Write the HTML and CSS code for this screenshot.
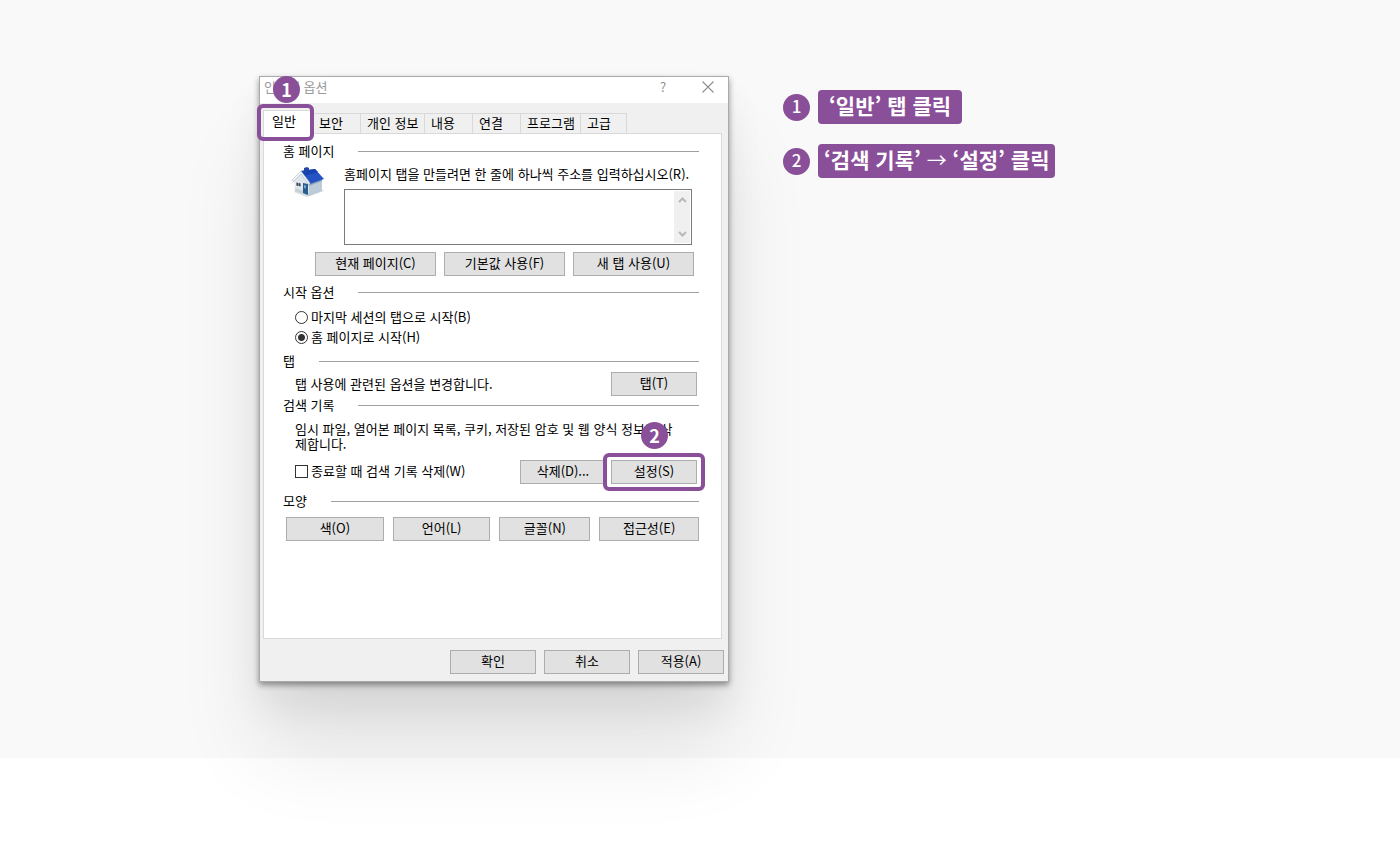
FILE: index.html
```html
<!DOCTYPE html>
<html lang="ko">
<head>
<meta charset="utf-8">
<meta name="viewport" content="width=device-width, initial-scale=1">
<title>인터넷 옵션</title>
<link rel="stylesheet" href="styles.css">
</head>
<body>
<main class="stage">
  <div class="guide">
    <section class="dialog" aria-label="인터넷 옵션">
      <header class="titlebar">
        <h1 class="title">인터넷 옵션</h1>
        <button class="winbtn" type="button" aria-label="도움말">?</button>
        <button class="winbtn" type="button" aria-label="닫기">
          <svg width="12" height="12" viewBox="0 0 12 12" fill="none" stroke="#8f8f8f" stroke-width="1.1"><path d="M.5.5l11 11M11.5.5l-11 11"/></svg>
        </button>
      </header>

      <div class="tabs" role="tablist">
        <div class="marked">
          <button class="tab tab-on" type="button" role="tab" aria-selected="true">일반</button>
          <span class="ring ring-tab"></span>
          <span class="badge badge-over badge-tab">1</span>
        </div>
        <button class="tab tab-first" type="button" role="tab">보안</button>
        <button class="tab tab-wide" type="button" role="tab">개인 정보</button>
        <button class="tab" type="button" role="tab">내용</button>
        <button class="tab" type="button" role="tab">연결</button>
        <button class="tab tab-program" type="button" role="tab">프로그램</button>
        <button class="tab tab-last" type="button" role="tab">고급</button>
      </div>

      <div class="panel">
        <section class="group">
          <h2 class="heading">홈 페이지</h2>
          <div class="home">
            <svg class="house" width="34" height="32" viewBox="0 0 34 32" aria-hidden="true">
              <path d="M3 25l13 5 17-6-5-3-22 1z" fill="#b5bcb5" opacity=".5"/>
              <path d="M3 13l7-8 8 12v12L4 24z" fill="#dfe7ed"/>
              <path d="M18 16l13-4v12l-13 5z" fill="#bccbd8"/>
              <path d="M18 17l13-5v2l-13 5z" fill="#8ea4ba"/>
              <path d="M4 21l14 5v3L4 24z" fill="#c6cfd2"/>
              <path d="M13 3V1l3-1 2 1v4h-5z" fill="#2647a4"/>
              <path d="M10 4l14-2 9 10-14 5z" fill="#2454c4"/>
              <path d="M10 4l14-2 3 3-14 4z" fill="#1743ae"/>
              <path d="M1 13l9-9 9 12-1 2-8-11-8 8z" fill="#f3f6f8" stroke="#a9b7c2" stroke-width=".6"/>
              <path d="M12 16l5 1v11l-5-2z" fill="#285d91"/>
              <path d="M13 18l2 .5v3l-2-.5z" fill="#75a8c9"/>
              <path d="M5 15l5 1v4l-5-1z" fill="#344657" stroke="#fff" stroke-width=".7"/>
              <path d="M7.500 15.500v4" stroke="#fff" stroke-width=".4"/>
            </svg>
            <div class="home-main">
              <label class="home-label" for="urls">홈페이지 탭을 만들려면 한 줄에 하나씩 주소를 입력하십시오(R).</label>
              <div class="urlbox">
                <textarea class="urls" id="urls"></textarea>
                <span class="scroll" aria-hidden="true">
                  <svg width="9" height="6" viewBox="0 0 9 6" fill="none" stroke="#b9b9b9" stroke-width="2"><path d="M1 5l3.500-3.500L8 5"/></svg>
                  <svg width="9" height="6" viewBox="0 0 9 6" fill="none" stroke="#b9b9b9" stroke-width="2"><path d="M1 1l3.500 3.500L8 1"/></svg>
                </span>
              </div>
            </div>
          </div>
          <div class="home-buttons">
            <button class="btn" type="button">현재 페이지(C)</button>
            <button class="btn" type="button">기본값 사용(F)</button>
            <button class="btn" type="button">새 탭 사용(U)</button>
          </div>
        </section>

        <section class="group group-start">
          <h2 class="heading">시작 옵션</h2>
          <div class="radios">
            <label class="option"><input class="radio" type="radio" name="start">마지막 세션의 탭으로 시작(B)</label>
            <label class="option"><input class="radio" type="radio" name="start" checked>홈 페이지로 시작(H)</label>
          </div>
        </section>

        <section class="group group-tight">
          <h2 class="heading">탭</h2>
          <div class="row">
            <p class="text">탭 사용에 관련된 옵션을 변경합니다.</p>
            <button class="btn btn-fixed" type="button">탭(T)</button>
          </div>
        </section>

        <section class="group group-tight group-history">
          <h2 class="heading">검색 기록</h2>
          <p class="text text-history">임시 파일, 열어본 페이지 목록, 쿠키, 저장된 암호 및 웹 양식 정보를 삭제합니다.</p>
          <div class="row">
            <label class="option option-grow"><input class="check" type="checkbox">종료할 때 검색 기록 삭제(W)</label>
            <button class="btn btn-fixed" type="button">삭제(D)...</button>
            <div class="marked marked-set">
              <button class="btn btn-fixed" type="button">설정(S)</button>
              <span class="ring ring-set"></span>
              <span class="badge badge-over badge-set">2</span>
            </div>
          </div>
        </section>

        <section class="group">
          <h2 class="heading">모양</h2>
          <div class="looks">
            <button class="btn" type="button">색(O)</button>
            <button class="btn" type="button">언어(L)</button>
            <button class="btn" type="button">글꼴(N)</button>
            <button class="btn" type="button">접근성(E)</button>
          </div>
        </section>
      </div>

      <footer class="actions">
        <button class="btn btn-fixed" type="button">확인</button>
        <button class="btn btn-fixed" type="button">취소</button>
        <button class="btn btn-fixed" type="button">적용(A)</button>
      </footer>
    </section>

    <ol class="steps">
      <li class="step"><span class="badge">1</span><span class="pill pill-wide">‘일반’ 탭 클릭</span></li>
      <li class="step"><span class="badge">2</span><span class="pill">‘검색 기록’ <span class="arrow">→</span> ‘설정’ 클릭</span></li>
    </ol>
  </div>
</main>
</body>
</html>
```
FILE: styles.css
```css
* { box-sizing: border-box; }

body {
  min-height: 100vh;
  margin: 0;
  background: #fff;
  color: #000;
  font: 13px/18px "Noto Sans CJK KR", sans-serif;
}

h1, h2, p, ol { margin: 0; padding: 0; font: inherit; }
button, textarea { font: inherit; color: inherit; }

.stage { background: #f9f9f9; padding: 76px 24px; }

.guide {
  max-width: 882px;
  margin: 0 auto;
  display: flex;
  flex-wrap: wrap;
  align-items: flex-start;
  gap: 54px;
}

/* Dialog window */
.dialog {
  flex: 0 1 470px;
  background: #f0f0f0;
  border: 1px solid #aaa;
  box-shadow:
    0 3px 6px rgba(0, 0, 0, .4),
    0 24px 36px rgba(0, 0, 0, .07),
    0 70px 80px rgba(0, 0, 0, .09);
}

.titlebar {
  display: flex;
  align-items: center;
  height: 26px;
  padding: 0 10px 6px 4px;
  background: #fff;
  color: #999;
}
.title { flex: 1; }
.winbtn {
  display: flex;
  align-items: center;
  justify-content: center;
  width: 20px;
  height: 20px;
  margin-left: 25px;
  padding: 0;
  border: 0;
  background: none;
  color: #8f8f8f;
}

/* Tabs */
.tabs { display: flex; align-items: flex-end; padding: 7px 3px 0; }
.tab {
  width: 48px;
  height: 20px;
  padding: 0 0 2px 6px;
  border: 1px solid #d9d9d9;
  border-width: 1px 1px 0 0;
  background: #f0f0f0;
  text-align: left;
  white-space: nowrap;
}
.tab-first { width: 47px; padding-left: 5px; }
.tab-wide { width: 64px; }
.tab-program { width: 60px; }
.tab-last { width: 46px; }
.tab-on {
  display: block;
  width: 51px;
  height: 24px;
  margin-bottom: -1px;
  padding: 0 0 4px 8px;
  border-left-width: 1px;
  background: #fff;
}

/* Numbered markers */
.marked { position: relative; }
.badge {
  display: flex;
  align-items: center;
  justify-content: center;
  width: 27px;
  height: 27px;
  padding-bottom: 2px;
  border-radius: 50%;
  background: #8a4f99;
  color: #fff;
  font-size: 17px;
  font-weight: 500;
}
.badge-over { position: absolute; font-size: 18px; font-weight: 700; }
.badge-tab { left: 10px; top: -34px; }
.badge-set { left: 30px; top: -38px; }
.ring {
  position: absolute;
  border: 4px solid #8a4f99;
  border-radius: 6px;
  pointer-events: none;
}
.ring-tab { inset: -6px 0 -8px -6px; }
.ring-set { inset: -7px -8px; }

/* Panel */
.panel {
  min-height: 506px;
  margin: 0 6px 0 3px;
  padding: 8px 22px 24px 19px;
  border: 1px solid #d9d9d9;
  background: #fff;
}
.group { display: grid; gap: 7px; margin-bottom: 7px; }
.group-start { margin-bottom: 6px; }
.group-tight { gap: 2px; margin-bottom: 0; }
.group-history { margin-bottom: 8px; }
.heading { display: flex; align-items: center; gap: 24px; }
.heading::after { content: ""; flex: 1; height: 1px; background: #a0a0a0; }
.text { flex: 1; padding-bottom: 2px; line-height: 15px; }
.text-history { padding: 5px 20px 7px 12px; }

.home { display: flex; gap: 19px; padding: 0 7px 0 8px; }
.house { flex: none; }
.home-main { flex: 1; }
.home-label { display: block; height: 22px; line-height: 14px; white-space: nowrap; }
.urlbox { position: relative; }
.urls {
  display: block;
  width: 100%;
  height: 56px;
  padding: 2px 20px 2px 4px;
  border: 1px solid #7a7a7a;
  border-radius: 0;
  background: #fff;
  resize: none;
}
.scroll {
  position: absolute;
  inset: 2px 2px 2px auto;
  width: 16px;
  display: flex;
  flex-direction: column;
  align-items: center;
  justify-content: space-between;
  padding: 6px 0;
  background: #f0f0f0;
}
.home-buttons {
  display: grid;
  grid-template-columns: repeat(3, 1fr);
  gap: 8px;
  padding: 0 5px 0 32px;
}

.btn {
  height: 24px;
  padding: 0 4px 2px;
  border: 1px solid #adadad;
  border-radius: 0;
  background: #e1e1e1;
  white-space: nowrap;
}
.btn-fixed { width: 86px; }

.radios { display: grid; gap: 2px; padding: 0 12px; }
.option { display: flex; align-items: center; gap: 3px; }
.option-grow { flex: 1; padding-bottom: 2px; }
.radio, .check {
  appearance: none;
  width: 13px;
  height: 13px;
  margin: 0;
  border: 1px solid #333;
  background: #fff;
}
.radio { border-radius: 50%; }
.radio:checked { background: radial-gradient(circle, #333 3px, #fff 4px); }

.row { display: flex; align-items: center; padding: 0 2px 0 12px; }
.marked-set { margin-left: 5px; }

.looks {
  display: grid;
  grid-template-columns: 98fr 98fr 91fr 100fr;
  gap: 9px;
  padding-left: 3px;
}

.actions {
  display: flex;
  justify-content: flex-end;
  gap: 8px;
  padding: 11px 4px 7px;
}

/* Steps beside the dialog */
.steps { display: grid; gap: 20px; padding-top: 14px; list-style: none; }
.step { display: flex; align-items: center; gap: 8px; }
.pill {
  padding: 0 6px 4px;
  border-radius: 4px;
  background: #8a4f99;
  color: #fff;
  font-size: 21px;
  font-weight: 700;
  line-height: 30px;
  white-space: nowrap;
}
.pill-wide { padding-left: 11px; padding-right: 11px; }
.arrow { font-size: 20px; font-weight: 400; line-height: 20px; }
```
